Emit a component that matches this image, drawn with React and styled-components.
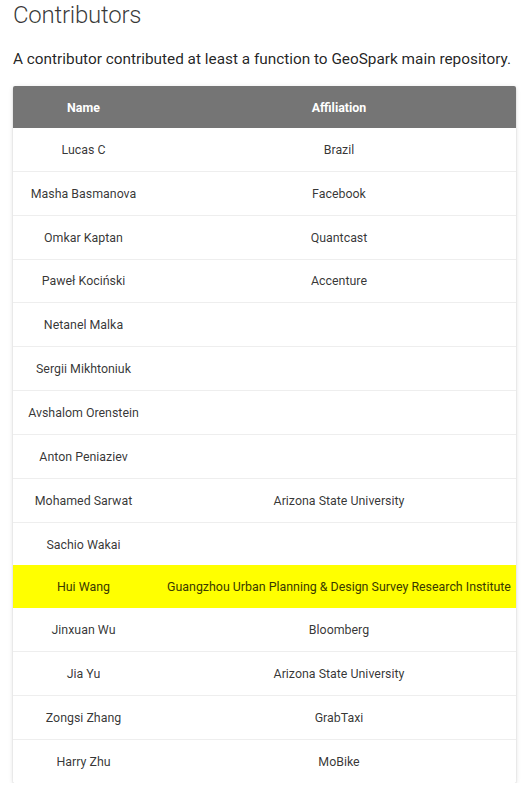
import React from "react";
import styled, { createGlobalStyle } from "styled-components";

const GlobalStyle = createGlobalStyle`
  body {
    margin: 0;
    background: #fff;
    font-family: Roboto, "Helvetica Neue", Arial, sans-serif;
    color: rgba(0, 0, 0, 0.87);
  }
`;

const Page = styled.div`
  padding: 0 14px 0 13px;
`;

const Title = styled.h1`
  margin: 0;
  font-size: 24px;
  line-height: 30px;
  font-weight: 300;
  color: rgba(0, 0, 0, 0.78);
  letter-spacing: -0.01em;
`;

const Intro = styled.p`
  margin: 16px 0 14px;
  font-size: 15.35px;
  line-height: 26px;
  color: rgba(0, 0, 0, 0.87);
`;

const Table = styled.table`
  width: 503px;
  table-layout: fixed;
  border-collapse: collapse;
  border-spacing: 0;
  font-size: 12.4px;
  box-shadow: 0 2px 2px 0 rgba(0, 0, 0, 0.14), 0 1px 5px 0 rgba(0, 0, 0, 0.12),
    0 3px 1px -2px rgba(0, 0, 0, 0.2);
  border-radius: 2px;
  overflow: hidden;
`;

const Head = styled.th`
  background: #757575;
  color: #fff;
  font-weight: 700;
  height: 42px;
  padding: ${(p) => (p.$wide ? "0 2px 0 10px" : "0")};
  text-align: center;
  width: ${(p) => p.$width || "auto"};
`;

const Row = styled.tr`
  background: ${(p) => (p.$highlight ? "#ffff00" : "#fff")};
  & + & td {
    border-top: 1px solid #eeeeee;
  }
`;

const Cell = styled.td`
  height: 42.85px;
  padding: ${(p) => (p.$wide ? "0 2px 0 10px" : "0")};
  text-align: center;
  white-space: nowrap;
  color: ${(p) => (p.$highlight ? "#3a3a00" : "rgba(0, 0, 0, 0.8)")};
`;

const contributors = [
  ["Lucas C", "Brazil"],
  ["Masha Basmanova", "Facebook"],
  ["Omkar Kaptan", "Quantcast"],
  ["Paweł Kociński", "Accenture"],
  ["Netanel Malka", ""],
  ["Sergii Mikhtoniuk", ""],
  ["Avshalom Orenstein", ""],
  ["Anton Peniaziev", ""],
  ["Mohamed Sarwat", "Arizona State University"],
  ["Sachio Wakai", ""],
  ["Hui Wang", "Guangzhou Urban Planning & Design Survey Research Institute"],
  ["Jinxuan Wu", "Bloomberg"],
  ["Jia Yu", "Arizona State University"],
  ["Zongsi Zhang", "GrabTaxi"],
  ["Harry Zhu", "MoBike"],
];

export default function App() {
  return (
    <Page>
      <GlobalStyle />
      <Title>Contributors</Title>
      <Intro>
        A contributor contributed at least a function to GeoSpark main
        repository.
      </Intro>
      <Table>
        <thead>
          <tr>
            <Head $width="141px">Name</Head>
            <Head $wide>Affiliation</Head>
          </tr>
        </thead>
        <tbody>
          {contributors.map(([name, aff]) => {
            const hl = name === "Hui Wang";
            return (
              <Row key={name} $highlight={hl}>
                <Cell $highlight={hl}>{name}</Cell>
                <Cell $highlight={hl} $wide>
                  {aff}
                </Cell>
              </Row>
            );
          })}
        </tbody>
      </Table>
    </Page>
  );
}
